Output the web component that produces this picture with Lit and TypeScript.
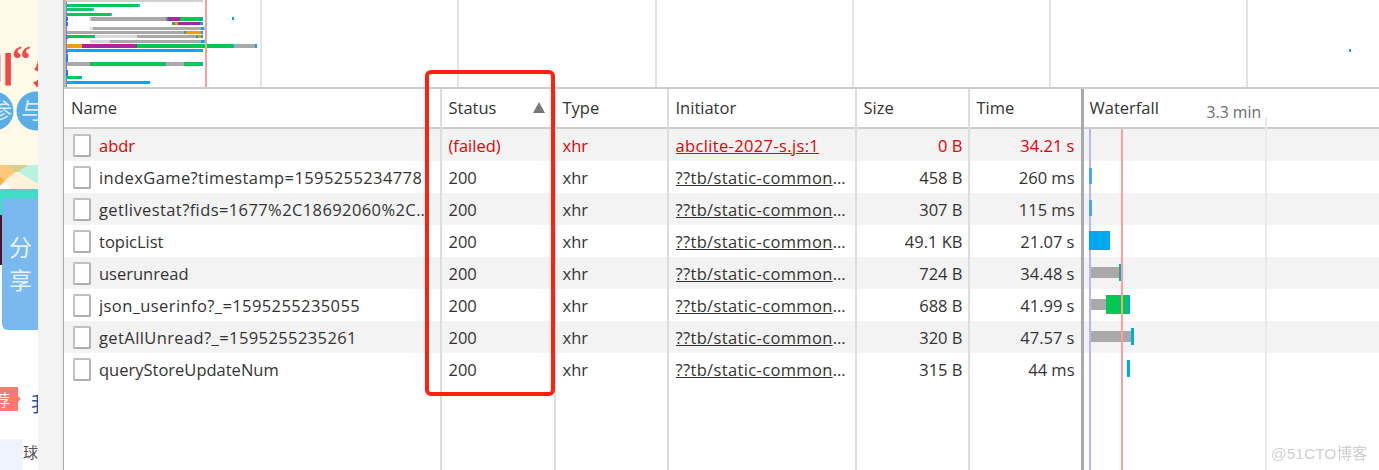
import { LitElement, html, css, svg } from "lit";
import { customElement } from "lit/decorators.js";

type Seg = [number, number, string];
const G = "#00c853", B = "#00a8f0", A = "#a9a9a9", L = "#d9d9d9", P = "#a626a4", O = "#f59b0a";

const overviewRows: [number, number, Seg[]][] = [
  [0, 2, [[66, 203, "#d0d0d0"]]],
  [4, 3, [[67, 138, G], [138, 140, "#35b8e8"]]],
  [8, 3, [[67, 92, "#1cc46a"], [92, 94, "#35b8e8"]]],
  [13, 3, [[67, 110, G], [110, 112, "#35b8e8"]]],
  [17, 4, [[89, 91, L], [91, 166, A], [166, 168, "#4a9a70"], [168, 180, P], [180, 201, G], [201, 203, B]]],
  [22, 3, [[172, 174, "#4a9a70"], [174, 175, G], [175, 178, O], [178, 200, P], [200, 203, B]]],
  [27, 3, [[90, 93, L], [93, 201, A], [201, 204, B], [204, 206, "#90d0e8"]]],
  [31, 3, [[67, 184, A], [184, 186, "#4a9a70"], [186, 201, O], [201, 203, B]]],
  [35, 3, [[67, 94, G], [94, 95, B], [95, 137, L], [137, 196, A], [196, 198, "#4a9a70"], [198, 201, O], [201, 203, B]]],
  [40, 3, [[90, 110, L], [110, 201, A], [201, 204, B], [204, 206, "#8a9aa8"]]],
  [44, 4, [[67, 82, O], [82, 136, P], [136, 137, "#555"], [137, 232, G], [232, 234, "#18a8c8"], [234, 255, A], [255, 257, B]]],
  [49, 3, [[67, 203, B]]],
  [62, 4, [[67, 90, A], [90, 165, G], [165, 166, "#18a8c8"], [166, 184, A], [184, 201, G], [201, 203, B]]],
  [76, 3, [[67, 80, G], [80, 82, B]]],
  [81, 3, [[67, 150, B]]],
  [17, 3, [[232, 234, B]]],
  [49, 3, [[1349, 1351, "#18a8b8"]]],
];
const leftTicks = [17, 22, 35, 49, 54, 58, 70, 72];

const INIT = "??tb/static-common/js/common.js";
const rows = [
  { name: "abdr", status: "(failed)", type: "xhr", init: "abclite-2027-s.js:1", size: "0 B", time: "34.21 s", failed: true },
  { name: "indexGame?timestamp=1595255234778", status: "200", type: "xhr", init: INIT, size: "458 B", time: "260 ms", wide: true },
  { name: "getlivestat?fids=1677%2C18692060%2C1234%2C5678", status: "200", type: "xhr", init: INIT, size: "307 B", time: "115 ms", wide: true },
  { name: "topicList", status: "200", type: "xhr", init: INIT, size: "49.1 KB", time: "21.07 s" },
  { name: "userunread", status: "200", type: "xhr", init: INIT, size: "724 B", time: "34.48 s" },
  { name: "json_userinfo?_=1595255235055", status: "200", type: "xhr", init: INIT, size: "688 B", time: "41.99 s", wide: true },
  { name: "getAllUnread?_=1595255235261", status: "200", type: "xhr", init: INIT, size: "320 B", time: "47.57 s", wide: true },
  { name: "queryStoreUpdateNum", status: "200", type: "xhr", init: INIT, size: "315 B", time: "44 ms" },
];

// x relative to the waterfall column (starts at 1082), y relative to the column top (89)
const wf: [number, number, number, number, string][] = [
  [7, 80, 3, 16, "#4da3f5"],
  [7, 112, 3, 16, "#4da3f5"],
  [7, 143, 21, 19, B],
  [9, 179, 27, 11, A], [36, 179, 1, 11, O], [37, 176, 3, 17, B],
  [9, 211, 15, 11, A], [24, 207, 22, 19, G], [46, 207, 2, 19, B],
  [9, 243, 41, 11, A], [49, 240, 3, 17, B],
  [45, 272, 3, 17, B],
];

@customElement("app-root")
export class AppRoot extends LitElement {
  static styles = css`
    :host { display: block; width: 1379px; height: 470px; overflow: hidden; position: relative; background: #fff; }
    .shell { display: flex; height: 470px; font-family: "Open Sans", "Noto Sans", sans-serif; font-size: 16.5px; color: #333; }
    .page { width: 38px; flex: none; display: block; }
    .gutter { width: 25px; flex: none; background: #f3f3f3; border-right: 1.5px solid #a8a8a8; }
    .panel { flex: 1; min-width: 0; display: flex; flex-direction: column; }
    .overview { height: 87px; flex: none; display: block; border-bottom: 2px solid #ccc; }
    .table { flex: 1; display: flex; min-height: 0; position: relative; }
    .col { display: flex; flex-direction: column; border-left: 2px solid #ddd; box-sizing: border-box; min-width: 0; }
    .col:first-child { border-left: none; }
    .name { width: 375.5px; }
    .status { width: 114px; }
    .type { width: 113px; }
    .init { width: 188px; }
    .size { width: 113px; }
    .time { width: 113px; }
    .fall { flex: 1; border-left: 3px solid #aaa; position: relative; }
    .head { height: 40px; flex: none; border-bottom: 2px solid #ccc; display: flex; align-items: center; padding: 0 7px 2px; box-sizing: border-box; white-space: nowrap; position: relative; }
    .status .head { justify-content: space-between; padding-right: 9px; }
    .fall .head { padding-left: 6px; }
    .cell { height: 32px; flex: none; display: flex; align-items: center; padding: 0 7px; box-sizing: border-box; min-width: 0; background: #fff; }
    .cell:nth-child(even) { background: #f3f3f3; }
    .fall .cell { padding: 0; }
    .cell.red { color: #e60000; }
    .txt { overflow: hidden; text-overflow: ellipsis; white-space: nowrap; min-width: 0; }
    .wide { letter-spacing: 0.4px; }
    .right { justify-content: flex-end; }
    .size .cell { padding-right: 5px; }
    .time .cell { padding-right: 6px; }
    .link { text-decoration: underline; letter-spacing: 0.35px; }
    .init .cell { padding-right: 8px; }
    .name .cell { padding-left: 9px; padding-right: 6px; gap: 8px; }
    .file { width: 18px; height: 23px; flex: none; box-sizing: border-box; background: #fff; border: 2px solid #c2c2c2; border-radius: 2px; border-right-color: #b4b4b4; border-bottom-color: #adadad; }
    .tri { width: 0; height: 0; border-left: 6.5px solid transparent; border-right: 6.5px solid transparent; border-bottom: 11px solid #777; }
    .scale { position: absolute; left: 123px; top: 12px; color: #6e6e6e; white-space: nowrap; font-size: 15.8px; }
    .marks { position: absolute; left: 0; top: 0; width: 294px; height: 381px; pointer-events: none; }
    .callout { position: absolute; left: 425px; top: 70px; width: 130px; height: 326px; box-sizing: border-box; border: 4.5px solid #ff2010; border-radius: 6px; pointer-events: none; }
    .mark { position: absolute; left: 1271px; top: 441px; font: 15.5px "Liberation Sans", "Noto Sans CJK SC", sans-serif; color: #cfcfcf; filter: blur(0.4px); white-space: nowrap; }
  `;

  private page() {
    return html`<svg class="page" width="38" height="470" viewBox="0 0 38 470">
      <rect width="38" height="470" fill="#fff" />
      <rect width="38" height="166" fill="#fff9e8" />
      <text x="-21" y="82" font-family="Noto Sans CJK SC" font-weight="900" font-size="36" fill="#f24848">川</text>
      <text x="31" y="72" text-anchor="end" font-family="Liberation Serif" font-weight="700" font-size="38" fill="#f24848">“</text>
      <text x="32" y="84" font-family="Noto Sans CJK SC" font-weight="900" font-size="36" fill="#f24848">火</text>
      <circle cx="-6" cy="111" r="19.5" fill="#5aaee8" />
      <circle cx="36" cy="111" r="19.5" fill="#5aaee8" />
      <text x="-11" y="119" font-family="Noto Sans CJK SC" font-size="23" fill="#d8ecfa">参</text>
      <text x="21" y="119" font-family="Noto Sans CJK SC" font-size="23" fill="#d8ecfa">与</text>
      <path d="M0 165h7l9 7L0 186z" fill="#ffc97a" />
      <path d="M0 177l5 3-5 5z" fill="#f8b040" />
      <path d="M7 165h21l-10 8h-2z" fill="#d9cf8c" />
      <path d="M18 172l10-7h10v19z" fill="#b9f2e0" />
      <path d="M16 172l2 0 20 12v7H13L4 181z" fill="#fff2d8" />
      <rect y="189" width="38" height="13" fill="#40dcc8" />
      <rect y="202" width="2" height="13" fill="#40dcc8" />
      <rect y="215" width="3" height="50" fill="#5a0f28" />
      <path d="M2 204a6 6 0 0 1 6-6h30v132H8a6 6 0 0 1-6-6z" fill="#7ab8f0" />
      <text x="9" y="256" font-family="Noto Sans CJK SC" font-size="23" fill="#e6f2fc">分</text>
      <text x="9" y="289" font-family="Noto Sans CJK SC" font-size="23" fill="#e6f2fc">享</text>
      <path d="M0 387h18v9l3 3-3 3v9H0z" fill="#ff7870" />
      <text x="-6" y="406" font-family="Noto Sans CJK SC" font-size="16" fill="#fff">荐</text>
      <text x="31" y="411" font-family="Noto Sans CJK SC" font-size="21" fill="#1f55a0">我</text>
      <rect y="439" width="23" height="31" fill="#eef3fd" />
      <text x="23" y="458" font-family="Noto Sans CJK SC" font-size="15" fill="#555">球</text>
    </svg>`;
  }

  private overview() {
    const grid = [260, 457, 655, 852, 1049, 1246];
    const off = 64.5;
    return html`<svg class="overview" width="1314.5" height="87" viewBox="0 0 1314.5 87" shape-rendering="crispEdges">
      ${grid.map((x) => svg`<rect x=${x - off} y="0" width="2" height="87" fill="#e4e4e4" />`)}
      <rect x="0" y="0" width="1.5" height="87" fill="#b8b8b8" />
      <rect x="1.5" y="0" width="1.5" height="87" fill="#7a7aff" />
      ${leftTicks.map((y) => svg`<rect x="2" y=${y} width="2" height="4" fill="#2a7ae8" />`)}
      ${overviewRows.map(([y, h, segs]) =>
        segs.map(([a, b, c]) => svg`<rect x=${a - off} y=${y} width=${b - a} height=${h} fill=${c} />`)
      )}
      <rect x=${205 - off} y="0" width="2" height="87" fill="#ff9c9c" />
    </svg>`;
  }

  private column(cls: string, head: unknown, cell: (r: (typeof rows)[number]) => unknown, right = false) {
    return html`<div class="col ${cls}">
      <div class="head">${head}</div>
      ${rows.map((r) => html`<div class="cell ${r.failed ? "red" : ""} ${right ? "right" : ""}">${cell(r)}</div>`)}
    </div>`;
  }

  render() {
    return html`<div class="shell">
        ${this.page()}
        <div class="gutter"></div>
        <div class="panel">
          ${this.overview()}
          <div class="table">
            ${this.column("name", "Name", (r) => html`<span class="file"></span><span class="txt ${r.wide ? "wide" : ""}">${r.name}</span>`)}
            ${this.column("status", html`<span>Status</span><span class="tri"></span>`, (r) => html`<span class="txt">${r.status}</span>`)}
            ${this.column("type", "Type", (r) => html`<span class="txt">${r.type}</span>`)}
            ${this.column("init", "Initiator", (r) => html`<span class="txt link">${r.init}</span>`)}
            ${this.column("size", "Size", (r) => html`<span class="txt">${r.size}</span>`, true)}
            ${this.column("time", "Time", (r) => html`<span class="txt">${r.time}</span>`, true)}
            <div class="col fall">
              <div class="head">Waterfall<span class="scale">3.3 min</span></div>
              ${rows.map(() => html`<div class="cell"></div>`)}
              <svg class="marks" viewBox="0 0 294 381" shape-rendering="crispEdges">
                <rect x="181" y="28" width="2" height="353" fill="#e9e9e9" />
                <rect x="5" y="40" width="2" height="341" fill="#b4b4ff" />
                ${wf.map(([x, y, w, h, c]) => svg`<rect x=${x - 2} y=${y - 1} width=${w} height=${h} fill=${c} />`)}
                <rect x="37" y="40" width="2" height="341" fill="#ff9c9c" />
              </svg>
            </div>
          </div>
        </div>
      </div>
      <div class="callout"></div>
      <div class="mark">@51CTO博客</div>`;
  }
}
